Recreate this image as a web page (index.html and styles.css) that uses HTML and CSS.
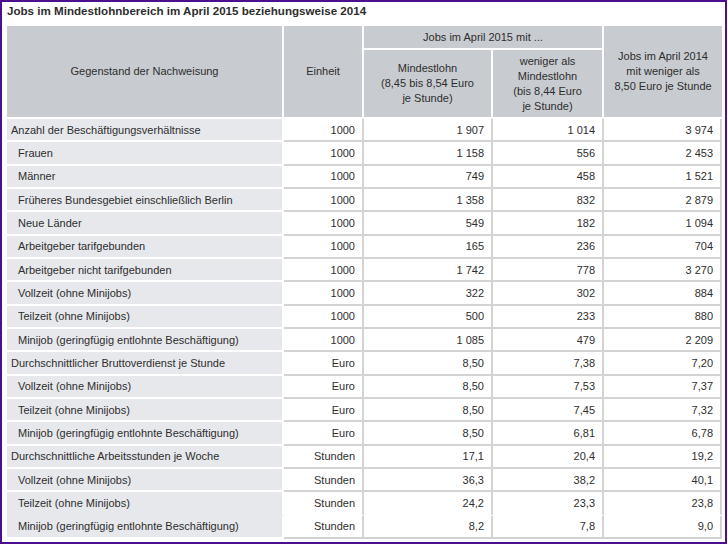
FILE: index.html
```html
<!DOCTYPE html>
<html lang="de">
<head>
<meta charset="utf-8">
<title>Jobs im Mindestlohnbereich</title>
<link rel="stylesheet" href="styles.css">
</head>
<body>
<div class="frame">
  <h1 class="title">Jobs im Mindestlohnbereich im April 2015 beziehungsweise 2014</h1>
  <table class="data">
    <colgroup>
      <col class="c1"><col class="c2"><col class="c3"><col class="c4"><col class="c5">
    </colgroup>
    <thead>
      <tr class="h1">
        <th rowspan="2">Gegenstand der Nachweisung</th>
        <th rowspan="2">Einheit</th>
        <th colspan="2">Jobs im April 2015 mit ...</th>
        <th rowspan="2" class="last">Jobs im April 2014<br>mit weniger als<br>8,50 Euro je Stunde</th>
      </tr>
      <tr class="h2">
        <th>Mindestlohn<br>(8,45 bis 8,54 Euro<br>je Stunde)</th>
        <th>weniger als<br>Mindestlohn<br>(bis 8,44 Euro<br>je Stunde)</th>
      </tr>
    </thead>
    <tbody>
      <tr><td class="lbl">Anzahl der Beschäftigungsverhältnisse</td><td>1000</td><td>1 907</td><td>1 014</td><td>3 974</td></tr>
      <tr><td class="lbl sub">Frauen</td><td>1000</td><td>1 158</td><td>556</td><td>2 453</td></tr>
      <tr><td class="lbl sub">Männer</td><td>1000</td><td>749</td><td>458</td><td>1 521</td></tr>
      <tr><td class="lbl sub">Früheres Bundesgebiet einschließlich Berlin</td><td>1000</td><td>1 358</td><td>832</td><td>2 879</td></tr>
      <tr><td class="lbl sub">Neue Länder</td><td>1000</td><td>549</td><td>182</td><td>1 094</td></tr>
      <tr><td class="lbl sub">Arbeitgeber tarifgebunden</td><td>1000</td><td>165</td><td>236</td><td>704</td></tr>
      <tr><td class="lbl sub">Arbeitgeber nicht tarifgebunden</td><td>1000</td><td>1 742</td><td>778</td><td>3 270</td></tr>
      <tr><td class="lbl sub">Vollzeit (ohne Minijobs)</td><td>1000</td><td>322</td><td>302</td><td>884</td></tr>
      <tr><td class="lbl sub">Teilzeit (ohne Minijobs)</td><td>1000</td><td>500</td><td>233</td><td>880</td></tr>
      <tr><td class="lbl sub">Minijob (geringfügig entlohnte Beschäftigung)</td><td>1000</td><td>1 085</td><td>479</td><td>2 209</td></tr>
      <tr><td class="lbl">Durchschnittlicher Bruttoverdienst je Stunde</td><td>Euro</td><td>8,50</td><td>7,38</td><td>7,20</td></tr>
      <tr><td class="lbl sub">Vollzeit (ohne Minijobs)</td><td>Euro</td><td>8,50</td><td>7,53</td><td>7,37</td></tr>
      <tr><td class="lbl sub">Teilzeit (ohne Minijobs)</td><td>Euro</td><td>8,50</td><td>7,45</td><td>7,32</td></tr>
      <tr><td class="lbl sub">Minijob (geringfügig entlohnte Beschäftigung)</td><td>Euro</td><td>8,50</td><td>6,81</td><td>6,78</td></tr>
      <tr><td class="lbl">Durchschnittliche Arbeitsstunden je Woche</td><td>Stunden</td><td>17,1</td><td>20,4</td><td>19,2</td></tr>
      <tr><td class="lbl sub">Vollzeit (ohne Minijobs)</td><td>Stunden</td><td>36,3</td><td>38,2</td><td>40,1</td></tr>
      <tr class="nob"><td class="lbl sub">Teilzeit (ohne Minijobs)</td><td>Stunden</td><td>24,2</td><td>23,3</td><td>23,8</td></tr>
      <tr><td class="lbl sub">Minijob (geringfügig entlohnte Beschäftigung)</td><td>Stunden</td><td>8,2</td><td>7,8</td><td>9,0</td></tr>
    </tbody>
  </table>
</div>
</body>
</html>
```

FILE: styles.css
```css
html, body {
  margin: 0;
  padding: 0;
  background: #ffffff;
}

.frame {
  box-sizing: border-box;
  width: 727px;
  height: 544px;
  border: 2px solid #4c0f8f;
  padding-left: 5px;
  overflow: hidden;
  font-family: "Liberation Sans", Arial, sans-serif;
  color: #2e2e2e;
}

.title {
  margin: 0 0 6px 0;
  font-size: 11.6px;
  line-height: 18px;
  font-weight: bold;
  color: #2e2e2e;
}

.data {
  border-collapse: separate;
  border-spacing: 0;
  width: 715px;
  table-layout: fixed;
  font-size: 11px;
}

.c1 { width: 277px; }
.c2 { width: 80px; }
.c3 { width: 129px; }
.c4 { width: 111px; }
.c5 { width: 118px; }

.data th {
  background: #c8cbcf;
  font-weight: normal;
  text-align: center;
  vertical-align: middle;
  padding: 0 4px;
  line-height: 15px;
  border-right: 2px solid #ffffff;
  border-bottom: 2px solid #ffffff;
}

.data th.last {
  border-right: 0;
}

.h1 th {
  height: 22px;
}

.h2 th {
  height: 67px;
}

.data td {
  height: 21.33px;
  padding: 0 7px 0 4px;
  line-height: 14px;
  text-align: right;
  vertical-align: middle;
  white-space: nowrap;
  border-right: 2px solid #d3d3d3;
  border-bottom: 2px solid #d3d3d3;
}

.data td.lbl {
  text-align: left;
  background: #e6e8eb;
  border-right-color: #ffffff;
  border-bottom-color: #ffffff;
}

.data td.sub {
  padding-left: 11px;
}

.data tr.nob td {
  border-bottom-color: transparent;
}
.data tr.nob td.lbl {
  border-bottom-color: #e6e8eb;
}
```
